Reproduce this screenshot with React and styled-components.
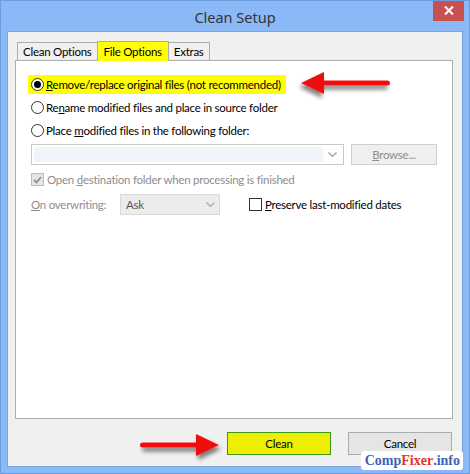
import React from 'react';
import styled, { createGlobalStyle } from 'styled-components';

const Global = createGlobalStyle`
  html, body { margin: 0; padding: 0; }
  body { font-family: Lato, "Noto Sans", sans-serif; font-size: 11.5px; letter-spacing: -0.25px; color: #000; }
`

const Frame = styled.div`
  position: relative;
  width: 470px;
  height: 474px;
  box-sizing: border-box;
  background: #8bb9f8;
  border: 1px solid #6d9be0;
  display: flex;
  flex-direction: column;
  overflow: hidden;
`
const TitleBar = styled.div`
  height: 30px;
  display: flex;
  align-items: center;
  justify-content: center;
  position: relative;
`
const Title = styled.div`
  font-family: "Noto Sans", sans-serif;
  font-size: 14.5px;
  letter-spacing: 0;
  color: #333;
  margin-top: 1px;
`
const CloseBtn = styled.div`
  position: absolute;
  top: -1px;
  right: 5px;
  width: 31px;
  height: 21px;
  background: #c75050;
  display: flex;
  align-items: center;
  justify-content: center;
`
const Client = styled.div`
  flex: 1;
  margin: 0 6px 6px 6px;
  background: #f0f0f0;
  border: 1px solid #7aa4de;
  padding: 7px 9px 11px 7px;
  display: flex;
  flex-direction: column;
`
const Tabs = styled.div`
  display: flex;
  align-items: flex-end;
  height: 21px;
  padding-left: 2px;
`
const Tab = styled.div`
  height: ${p => (p.$active ? 20 : 18)}px;
  box-sizing: border-box;
  padding: 0 ${p => (p.$active ? 6 : 5)}px;
  border: 1px solid #adadad;
  border-bottom: none;
  background: ${p => (p.$active ? '#ffff00' : '#f0f0f0')};
  margin-left: ${p => (p.$first ? 0 : -1)}px;
  display: flex;
  align-items: center;
  white-space: nowrap;
  position: relative;
  z-index: ${p => (p.$active ? 2 : 1)};
  margin-bottom: ${p => (p.$active ? -1 : 0)}px;
`
const Panel = styled.div`
  flex: 1;
  background: #fff;
  border: 1px solid #adadad;
  padding: 14px 0 0 15px;
  display: flex;
  flex-direction: column;
`
const Highlight = styled.div`
  align-self: flex-start;
  background: #ffff00;
  margin-left: -3px;
  padding: 0 5px 0 3px;
  height: 19px;
  display: flex;
  align-items: center;
`
const Row = styled.div`
  display: flex;
  align-items: center;
  height: 19px;
  margin-top: ${p => p.$gap || 0}px;
  color: ${p => (p.$dim ? '#8d8d8d' : '#000')};
`
const Radio = styled.span`
  width: 13px;
  height: 13px;
  box-sizing: border-box;
  border-radius: 50%;
  border: 1px solid #333;
  background: #fff;
  margin-right: 2px;
  display: flex;
  align-items: center;
  justify-content: center;
  &::after {
    content: '';
    display: ${p => (p.$on ? 'block' : 'none')};
    width: 7px;
    height: 7px;
    border-radius: 50%;
    background: #000;
  }
`
const Check = styled.span`
  width: 13px;
  height: 13px;
  box-sizing: border-box;
  border: 1px solid ${p => (p.$disabled ? '#bcbcbc' : '#333')};
  background: ${p => (p.$disabled ? '#e6e6e6' : '#fff')};
  margin-right: 3px;
  display: flex;
  align-items: center;
  justify-content: center;
`
const FolderRow = styled.div`
  display: flex;
  align-items: center;
  margin-top: 4px;
  height: 21px;
`
const Combo = styled.div`
  width: 313px;
  height: 21px;
  box-sizing: border-box;
  border: 1px solid #c9c9c9;
  background: #fff;
  display: flex;
  align-items: center;
  padding: 2px;
`
const ComboField = styled.div`
  flex: 1;
  height: 15px;
  background: #f0f4fb;
`
const Chevron = styled.div`
  width: 18px;
  display: flex;
  justify-content: center;
`
const Button = styled.div`
  width: ${p => p.$w || 104}px;
  height: ${p => p.$h || 23}px;
  box-sizing: border-box;
  border: 1px solid ${p => p.$border || '#acacac'};
  background: ${p => p.$bg || '#e5e5e5'};
  color: ${p => p.$color || '#000'};
  display: flex;
  align-items: center;
  justify-content: center;
  margin-left: ${p => p.$ml || 0}px;
`
const OverRow = styled.div`
  display: flex;
  align-items: center;
  margin-top: 5px;
  height: 21px;
`
const Label = styled.span`
  color: #8d8d8d;
  width: 89px;
  flex-shrink: 0;
  white-space: nowrap;
`
const Select = styled.div`
  width: 100px;
  height: 21px;
  box-sizing: border-box;
  border: 1px solid #d9d9d9;
  background: #ececec;
  color: #555;
  display: flex;
  align-items: center;
  justify-content: space-between;
  padding: 0 4px 0 5px;
  margin-right: 29px;
`
const Footer = styled.div`
  display: flex;
  justify-content: flex-end;
  margin-top: 13px;
  padding-right: 1px;
`
const Arrow = styled.svg`
  position: absolute;
  overflow: visible;
`
const Watermark = styled.div`
  position: absolute;
  right: 6px;
  bottom: 3px;
  background: #fff;
  padding: 0 3px 0 4px;
  height: 19px;
  display: flex;
  align-items: center;
  font-family: "Liberation Serif", "DejaVu Serif", serif;
  font-weight: bold;
  font-size: 14px;
  letter-spacing: 0;
  color: #3b63b5;
  border-radius: 3px;
`
const Red = styled.span`
  color: #e2332a;
`

function ChevronIcon ({ color }) {
  return (
    <svg width="9" height="6" viewBox="0 0 9 6">
      <path d="M0.5 0.5 L4.5 4.5 L8.5 0.5" fill="none" stroke={color} strokeWidth="1.2" />
    </svg>
  )
}

function RedArrow ({ left, top, width, dir }) {
  const flip = dir === 'left'
  return (
    <Arrow style={{ left, top }} width={width} height="30" viewBox={`0 0 ${width} 30`}>
      <defs>
        <filter id={`sh-${dir}`} x="-20%" y="-50%" width="140%" height="200%">
          <feGaussianBlur in="SourceAlpha" stdDeviation="2" />
          <feOffset dx="2" dy="4" />
          <feComponentTransfer><feFuncA type="linear" slope="0.5" /></feComponentTransfer>
          <feMerge><feMergeNode /><feMergeNode in="SourceGraphic" /></feMerge>
        </filter>
      </defs>
      <g transform={flip ? `translate(${width} 0) scale(-1 1)` : ''} filter={`url(#sh-${dir})`}>
        <path
          d={`M3 10.5 Q0 10.5 0 13 Q0 15.5 3 15.5 L${width - 30} 15.5 L${width - 30} 24 L${width - 7} 13 L${width - 30} 2 L${width - 30} 10.5 Z`}
          fill="#f01010"
        />
      </g>
    </Arrow>
  )
}

export default function App () {
  return (
    <Frame>
      <Global />
      <TitleBar>
        <Title>Clean Setup</Title>
        <CloseBtn>
          <svg width="10" height="9" viewBox="0 0 10 9">
            <path d="M1 0.5 L9 8.5 M9 0.5 L1 8.5" stroke="#fff" strokeWidth="2" />
          </svg>
        </CloseBtn>
      </TitleBar>
      <Client>
        <Tabs>
          <Tab $first>Clean Options</Tab>
          <Tab $active>File Options</Tab>
          <Tab>Extras</Tab>
        </Tabs>
        <Panel>
          <Highlight>
            <Radio $on />
            <span><u>R</u>emove/replace original files (not recommended)</span>
          </Highlight>
          <Row $gap={4}>
            <Radio />
            <span>Re<u>n</u>ame modified files and place in source folder</span>
          </Row>
          <Row $gap={4}>
            <Radio />
            <span>Place <u>m</u>odified files in the following folder:</span>
          </Row>
          <FolderRow>
            <Combo>
              <ComboField />
              <Chevron><ChevronIcon color="#9a9a9a" /></Chevron>
            </Combo>
            <Button $w={86} $h={21} $ml={7} $bg="#efefef" $border="#cfcfcf" $color="#8d8d8d">
              <span><u>B</u>rowse...</span>
            </Button>
          </FolderRow>
          <Row $gap={5} $dim>
            <Check $disabled>
              <svg width="9" height="8" viewBox="0 0 9 8">
                <path d="M1 4 L3.5 6.5 L8 1" fill="none" stroke="#8d8d8d" strokeWidth="1.8" />
              </svg>
            </Check>
            <span>Open <u>d</u>estination folder when processing is finished</span>
          </Row>
          <OverRow>
            <Label><u>O</u>n overwriting:</Label>
            <Select>
              <span>Ask</span>
              <ChevronIcon color="#a5a5a5" />
            </Select>
            <Check />
            <span><u>P</u>reserve last-modified dates</span>
          </OverRow>
        </Panel>
        <Footer>
          <Button $bg="#eeee00" $border="#3a9a1a">Clean</Button>
          <Button $ml={17}>Cancel</Button>
        </Footer>
      </Client>
      <RedArrow left={293} top={69} width={96} dir="left" />
      <RedArrow left={139} top={431} width={86} dir="right" />
      <Watermark>Comp<Red>Fixer</Red>.info</Watermark>
    </Frame>
  )
}
